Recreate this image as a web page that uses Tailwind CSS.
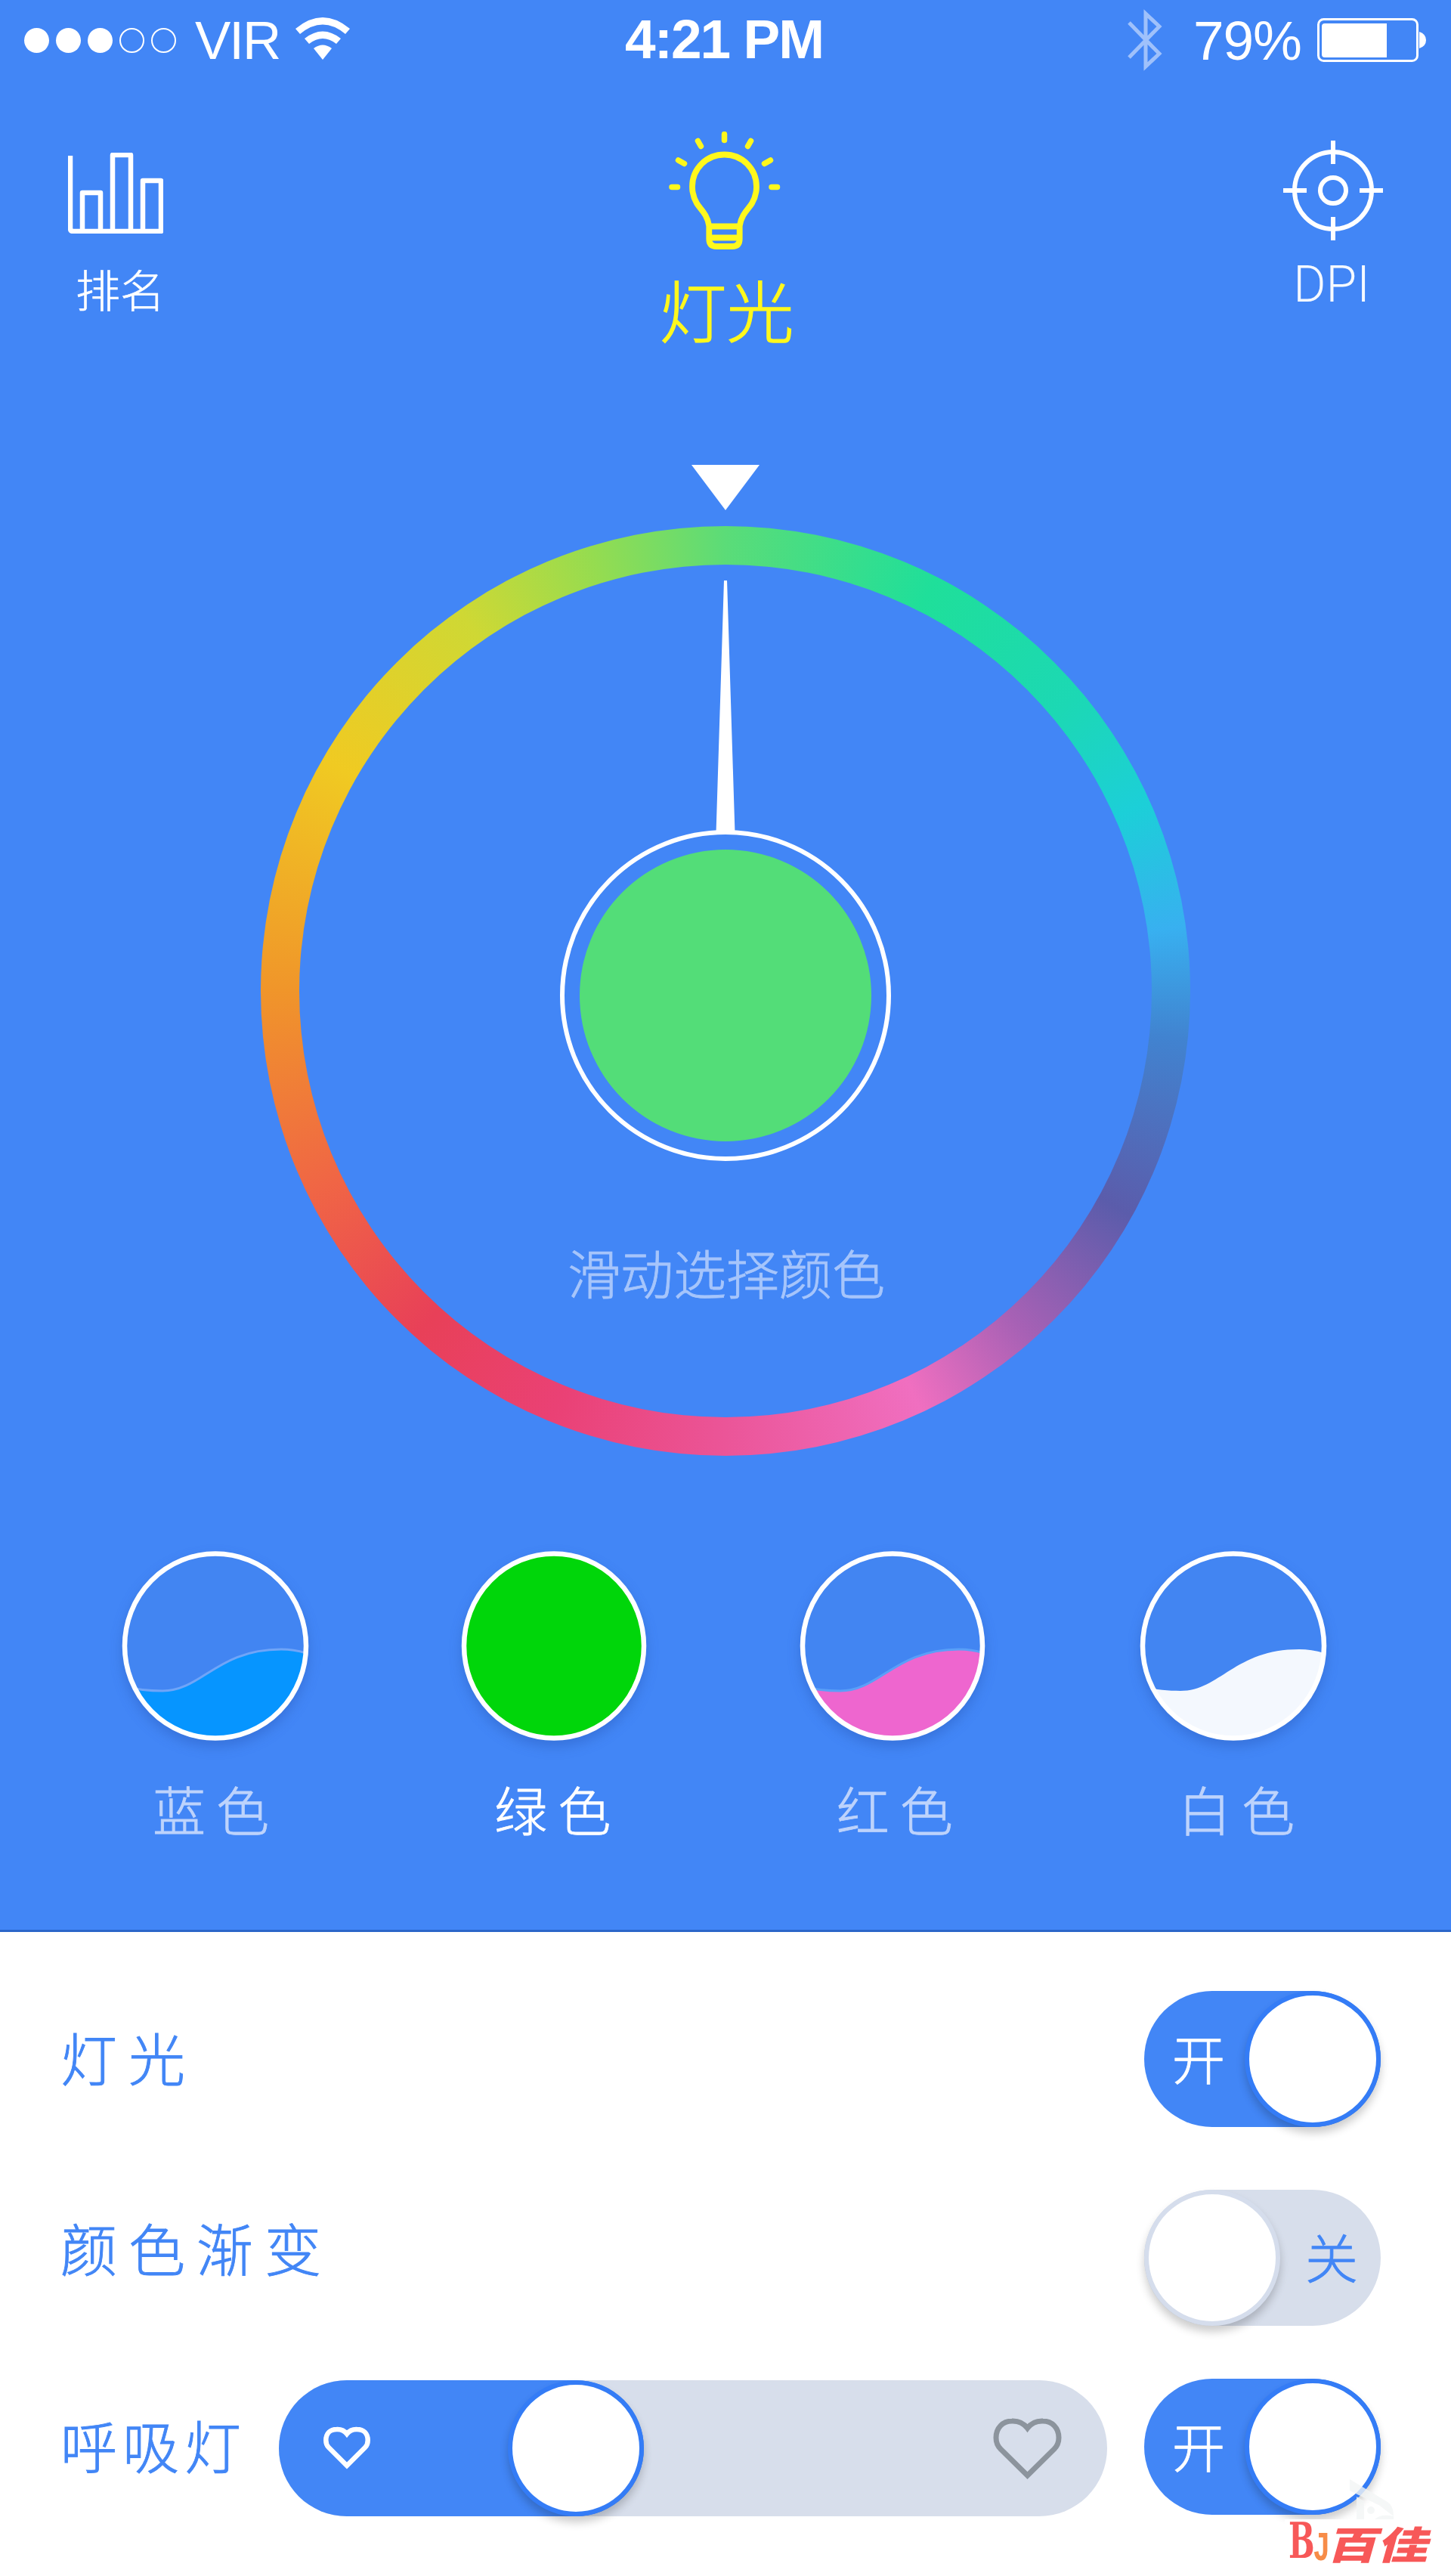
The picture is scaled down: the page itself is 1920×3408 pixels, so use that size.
<!DOCTYPE html>
<html lang="zh-CN">
<head>
<meta charset="utf-8">
<title>灯光</title>
<script src="https://cdn.jsdelivr.net/npm/@tailwindcss/browser@4"></script>
</head>
<body class="w-[1920px] h-[3408px] overflow-hidden bg-white font-['Liberation_Sans','Noto_Sans_CJK_SC',sans-serif]">
<main class="flex flex-col w-[1920px] h-[3408px]">
  <section class="flex flex-col h-[2556px] bg-[#4286f6] border-b-3 border-[#2b66c9] text-white">

    <!-- status bar -->
    <div class="grid grid-cols-3 h-[106px] shrink-0 items-center pl-8 pr-8">
      <div class="flex items-center gap-[21px]">
        <div class="flex gap-[9px]">
          <i class="size-[33px] rounded-full bg-white"></i>
          <i class="size-[33px] rounded-full bg-white"></i>
          <i class="size-[33px] rounded-full bg-white"></i>
          <i class="size-[33px] rounded-full border-2 border-white"></i>
          <i class="size-[33px] rounded-full border-2 border-white"></i>
        </div>
        <div class="flex items-center gap-[21px] pl-1">
          <span class="text-[71px] leading-none tracking-[-2px]">VIR</span>
          <svg class="w-[72px] h-[56px] -mt-1" viewBox="0 0 72 56" fill="#fff">
            <path d="M0 15Q36 -15 72 15L66 22Q36 -3 6 22Z"/>
            <path d="M12 28Q36 9 60 28L54 35Q36 21 18 35Z"/>
            <path d="M24 41Q36 32 48 41L36 56Z"/>
          </svg>
        </div>
      </div>
      <div class="text-center text-[73px] leading-none tracking-[-2px] font-bold -mt-1 -ml-1">4:21 PM</div>
      <div class="flex items-center justify-end">
        <svg class="w-[46px] h-[84px] mr-[41px]" viewBox="0 0 46 84" fill="none" stroke="#9fc1fb" stroke-width="5"><path d="M2 19L42 60L24 77V7L42 24L2 65"/></svg>
        <span class="text-[73px] leading-none tracking-[-1px] mr-[21px]">79%</span>
        <svg class="w-[145px] h-[58px]" viewBox="0 0 145 58"><rect x="1.5" y="1.5" width="131" height="55" rx="7" fill="none" stroke="#fff" stroke-width="3"/><path d="M10 7H92V52H10Q6 52 6 48V11Q6 7 10 7Z" fill="#fff"/><path d="M135 18Q144 21 144 29Q144 37 135 40Z" fill="#fff"/></svg>
      </div>
    </div>

    <!-- tabs -->
    <nav class="flex justify-between items-start h-[509px] shrink-0 pt-16 pl-[79px] pr-[76px]">
      <a class="flex flex-col items-center w-40 pt-8">
        <svg class="w-[126px] h-[107px] mr-3" viewBox="0 0 126 107" fill="none" stroke="#fff" stroke-width="6.500" stroke-linejoin="round"><path d="M3 4V100Q3 104 7 104H123V37H99V104M19 104V53H43V104M59 104V3H83V104"/></svg>
        <span class="mt-[43px] text-[59px] leading-[60px] font-light [-webkit-text-stroke:0.6px] font-['Noto_Sans_CJK_SC',sans-serif]">排名</span>
      </a>
      <a class="flex flex-col items-center w-[180px] pt-1 text-[#fff81c]">
        <svg class="w-[148px] h-[156px] mr-[6px]" viewBox="0 0 148 156" fill="none" stroke="currentColor" stroke-width="7.800">
          <path d="M53.300 125C51 109 41 102 37 95C33 88 31 82 31 73C31 49 50 30.500 73.500 30.500C97 30.500 116 49 116 73C116 82 114 88 110 95C106 102 96 109 93.700 125V142Q93.700 152 84 152H63Q53.300 152 53.300 142Z"/>
          <path d="M53 125.500H94M53 140.500H94"/>
          <path stroke-linecap="round" stroke-width="7.500" d="M73.500 3.500V11.500M38.500 12.500L42.500 19.500M108.500 12.500L104.500 19.500M12.500 38L20.500 42.500M134.500 38L126.500 42.500M4 73.500H11.500M136 73.500H143.500"/>
        </svg>
        <span class="mt-[33px] text-[89px] leading-[90px] font-light [-webkit-text-stroke:1.2px] font-['Noto_Sans_CJK_SC',sans-serif]">灯光</span>
      </a>
      <a class="flex flex-col items-center w-40 pt-4">
        <svg class="w-[132px] h-[132px]" viewBox="0 0 132 132" fill="none" stroke="#fff" stroke-width="6"><circle cx="66" cy="66" r="51"/><circle cx="66" cy="66" r="17"/><path d="M66 0V31M66 101V132M0 66H31M101 66H132"/></svg>
        <span class="mt-[29px] mr-1 text-[66px] leading-[60px] font-light font-['Roboto','Liberation_Sans',sans-serif] text-white/95">DPI</span>
      </a>
    </nav>

    <!-- colour wheel -->
    <svg class="w-[90px] h-[60px] shrink-0 self-center" viewBox="0 0 90 60"><path d="M0 0H90L45 60Z" fill="#fff"/></svg>
    <div class="mt-[21px] w-[1230px] h-[1230px] shrink-0 self-center rounded-full p-[51px] bg-[conic-gradient(#5bdc78_0deg,#1fdf9a_27deg,#1cd8b4_50deg,#1ccfd8_66deg,#38b0f0_82deg,#4183d0_96deg,#5b5cab_119deg,#a861b5_139deg,#f06fc0_155deg,#eb5598_180deg,#ea4175_202deg,#e84058_222deg,#f06545_244deg,#f0952a_270deg,#f0ca22_300deg,#cfd834_325deg,#95dc50_343deg,#5bdc78_360deg)]">
      <div class="flex flex-col items-center size-full rounded-full bg-[#4286f6] pt-[21px]">
        <svg class="w-[26px] h-[334px] shrink-0" viewBox="0 0 26 334"><path d="M11 0H15L25.5 334H.5Z" fill="#fff"/></svg>
        <div class="-mt-[4px] size-[438px] shrink-0 rounded-full border-6 border-white p-[20px]"><div class="size-full rounded-full bg-[#53dd78]"></div></div>
        <p class="mt-[107px] ml-[2px] text-[70px] leading-[80px] font-light [-webkit-text-stroke:0.8px] text-[#a6c5fb] font-['Noto_Sans_CJK_SC',sans-serif]">滑动选择颜色</p>
      </div>
    </div>

    <!-- colour presets -->
    <div class="flex justify-between shrink-0 mt-[126px] pl-[162px] pr-[165px]">
      <svg class="w-[246px] h-[251px] overflow-visible drop-shadow-[0_8px_8px_rgba(30,70,160,0.3)]" viewBox="0 0 246 251"><clipPath id="c"><ellipse cx="123" cy="125.500" rx="120" ry="122"/></clipPath><ellipse cx="123" cy="125.500" rx="120" ry="122" fill="#4285f2"/><path clip-path="url(#c)" d="M0 178C20 184 36 185 53 185C105 185 125 130 210 130Q228 130 246 136V251H0Z" fill="#0695ff" stroke="#6fa5f8" stroke-width="3"/><ellipse cx="123" cy="125.500" rx="120" ry="122" fill="none" stroke="#fff" stroke-width="6.500"/></svg>
      <svg class="w-[244px] h-[251px] overflow-visible drop-shadow-[0_8px_8px_rgba(30,70,160,0.3)]" viewBox="0 0 244 251"><ellipse cx="121" cy="125.500" rx="119" ry="122" fill="#00d60a" stroke="#fff" stroke-width="6.500"/></svg>
      <svg class="w-[246px] h-[251px] overflow-visible drop-shadow-[0_8px_8px_rgba(30,70,160,0.3)]" viewBox="0 0 246 251"><ellipse cx="122" cy="125.500" rx="119" ry="122" fill="#4285f2"/><path clip-path="url(#c)" d="M0 178C20 184 36 185 53 185C105 185 125 130 210 130Q228 130 246 136V251H0Z" fill="#ee66cf" stroke="#5a9ff8" stroke-width="3"/><ellipse cx="122" cy="125.500" rx="119" ry="122" fill="none" stroke="#fff" stroke-width="6.500"/></svg>
      <svg class="w-[246px] h-[251px] overflow-visible drop-shadow-[0_8px_8px_rgba(30,70,160,0.3)]" viewBox="0 0 246 251"><ellipse cx="123" cy="125.500" rx="120" ry="122" fill="#4285f2"/><path clip-path="url(#c)" d="M0 178C20 184 36 185 53 185C105 185 125 130 210 130Q228 130 246 136V251H0Z" fill="#f4f8fe"/><ellipse cx="123" cy="125.500" rx="120" ry="122" fill="none" stroke="#fff" stroke-width="6.500"/></svg>
    </div>
    <div class="flex justify-between shrink-0 mt-[50px] pl-[202px] pr-[193px] text-[70px] leading-[80px] tracking-[14px] font-light [-webkit-text-stroke:0.8px] text-[#bdd3fc] font-['Noto_Sans_CJK_SC',sans-serif]">
      <span>蓝色</span><span class="text-white">绿色</span><span>红色</span><span>白色</span>
    </div>
  </section>

  <!-- settings -->
  <section class="flex flex-col flex-1 pl-20 pr-[93px] text-[#4286f6] font-light text-[75px] [-webkit-text-stroke:0.9px] font-['Noto_Sans_CJK_SC',sans-serif]">
    <div class="flex items-center justify-between mt-[78px] h-[180px] shrink-0">
      <span class="leading-[80px] tracking-[15px] -mt-1.5">灯光</span>
      <div class="flex items-center justify-between w-[313px] h-[180px] rounded-full bg-[#4286f6] pl-[37px]">
        <span class="-mt-1 text-[70px] leading-[80px] text-white">开</span>
        <i class="size-[180px] rounded-full bg-white border-6 border-[#347cf6] shadow-[0_8px_12px_rgba(0,0,0,0.2)]"></i>
      </div>
    </div>
    <div class="flex items-center justify-between mt-[83px] h-[180px] shrink-0">
      <span class="leading-[80px] tracking-[15px] -mt-7">颜色渐变</span>
      <div class="flex items-center justify-between w-[313px] h-[180px] rounded-full bg-[#d7deeb] pr-[30px]">
        <i class="size-[180px] rounded-full bg-white border-6 border-[#d5ddec] shadow-[0_8px_12px_rgba(0,0,0,0.2)]"></i>
        <span class="-mt-1 text-[70px] leading-[80px]">关</span>
      </div>
    </div>
    <div class="flex items-center mt-[70px] h-[180px] shrink-0">
      <span class="w-[289px] shrink-0 leading-[80px] tracking-[7px] -mt-1.5">呼吸灯</span>
      <div class="flex items-center justify-between mt-[4px] w-[1096px] h-[180px] shrink-0 rounded-full bg-[#d7deeb] pr-[60px]">
        <div class="flex items-center justify-between w-[483px] h-[180px] rounded-full bg-[#4286f6] pl-[59px]">
          <svg class="w-[62px] h-[57px] -mt-px" viewBox="0 0 62 57" fill="none" stroke="#fff" stroke-width="6.500"><path d="M31 52L7 28Q3.300 24.500 3.300 18.500C3.300 9.500 9 4 17.500 4Q26 3.500 31 10Q36 3.500 44.500 4C53 4 58.700 9.500 58.700 18.500Q58.700 24.500 55 28Z"/></svg>
          <i class="size-[180px] rounded-full bg-white border-6 border-[#347cf6] shadow-[0_8px_12px_rgba(0,0,0,0.2)]"></i>
        </div>
        <svg class="w-[91px] h-[81px]" viewBox="0 0 91 81" fill="none" stroke="#8c949d" stroke-width="7"><path d="M45.500 76L10 41Q4 35 4 26C4 13 13 4 25 4Q38 3.500 45.500 13.500Q53 3.500 66 4C78 4 87 13 87 26Q87 35 81 41Z"/></svg>
      </div>
      <div class="flex items-center justify-between ml-[49px] w-[313px] h-[180px] shrink-0 rounded-full bg-[#4286f6] pl-[37px]">
        <span class="-mt-1 text-[70px] leading-[80px] text-white">开</span>
        <i class="size-[180px] rounded-full bg-white border-6 border-[#347cf6] shadow-[0_8px_12px_rgba(0,0,0,0.2)]"></i>
      </div>
    </div>
  </section>
</main>

<!-- corner brand mark over the page -->
<svg class="absolute left-[1786px] top-[3280px] w-[60px] h-[53px]" viewBox="0 0 60 53" fill="#f3f5f5" fill-opacity=".8"><path d="M0 0L50 30Q58 35 58 49Q50 43 40 35L0 15ZM9 23L19 29V53H9ZM33 53Q42 45 58 49V53Z"/><circle cx="28" cy="41" r="5"/></svg>
<div class="absolute left-[1700px] top-[3333px] w-[220px] h-[75px] bg-white">
  <span class="absolute left-[5px] top-[-5px] text-[66px] leading-[66px] font-bold text-[#f75858] font-['DejaVu_Serif',serif] origin-left scale-x-[0.62]">B</span>
  <span class="absolute left-[37px] top-[13px] text-[54px] leading-[54px] font-bold text-[#f78c48] font-['Liberation_Mono',monospace] origin-left scale-x-[0.72]">J</span>
  <span class="absolute left-[61px] top-[1px] text-[67px] leading-[60px] font-black text-[#f75858] font-['Noto_Sans_CJK_SC',sans-serif] -skew-x-12 scale-y-[0.76] whitespace-nowrap">百佳</span>
</div>
</body>
</html>
